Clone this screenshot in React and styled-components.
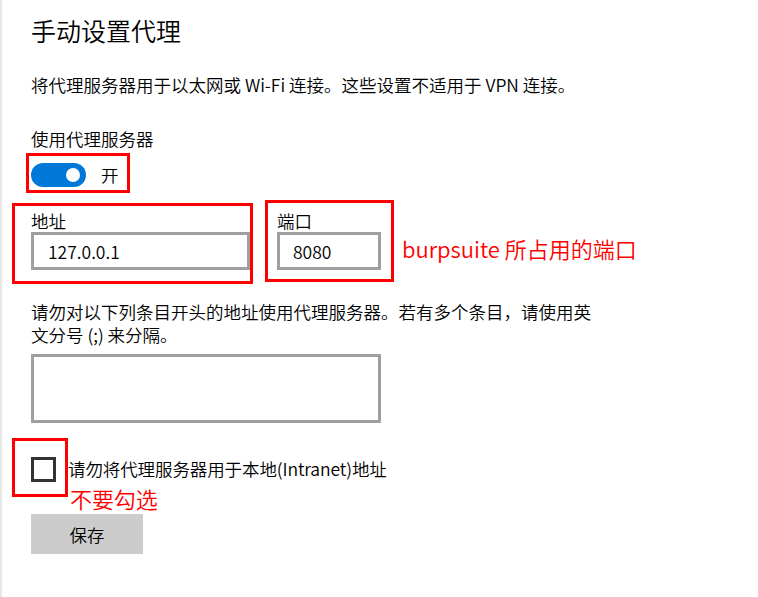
import styled, { createGlobalStyle } from "styled-components";

const GlobalStyle = createGlobalStyle`
  html, body {
    margin: 0;
    padding: 0;
    background: #ffffff;
  }
  body {
    font-family: "Noto Sans CJK SC", "Noto Sans", sans-serif;
    font-weight: 350;
    color: #000000;
  }
`;

const Page = styled.div`
  box-sizing: border-box;
  min-height: 597px;
  border-left: 2px solid #e8e8e8;
  padding: 13px 0 0 29px;
  display: flex;
  flex-direction: column;
  align-items: flex-start;
`;

const Title = styled.h1`
  margin: 0;
  font-size: 25px;
  font-weight: 350;
  line-height: 34px;
`;

const Text = styled.p`
  margin: ${(p) => p.$mt || 0}px 0 0 0;
  font-size: 17.5px;
  line-height: ${(p) => p.$lh || 24}px;
  max-width: ${(p) => p.$maxw || "none"};
`;

const Highlight = styled.div`
  box-sizing: border-box;
  border: 3px solid #ff0000;
  margin: ${(p) => p.$margin || 0};
  padding: ${(p) => p.$pad || 0};
  display: flex;
  flex-direction: ${(p) => (p.$col ? "column" : "row")};
  align-items: ${(p) => (p.$col ? "flex-start" : "center")};
`;

const Toggle = styled.div`
  width: 55px;
  height: 24px;
  border-radius: 12px;
  background: #0078d7;
  position: relative;
  &::after {
    content: "";
    position: absolute;
    right: 6px;
    top: 5px;
    width: 14px;
    height: 14px;
    border-radius: 50%;
    background: #ffffff;
  }
`;

const ToggleLabel = styled.span`
  margin-left: 15px;
  font-size: 17.5px;
  line-height: 24px;
`;

const FieldsRow = styled.div`
  margin: 7px 0 0 -19px;
  display: flex;
  align-items: flex-start;
`;

const FieldLabel = styled.div`
  font-size: 17.5px;
  line-height: 23px;
`;

const Input = styled.div`
  box-sizing: border-box;
  width: ${(p) => p.$w}px;
  height: 38px;
  border: 3px solid #9f9f9f;
  padding-left: ${(p) => p.$pl || 14}px;
  display: flex;
  align-items: center;
  font-size: 17.5px;
`;

const Note = styled.span`
  color: #ff0000;
  font-size: 22px;
  line-height: 30px;
  margin: ${(p) => p.$margin || 0};
`;

const TextArea = styled.div`
  box-sizing: border-box;
  margin-top: 8px;
  width: 350px;
  height: 69px;
  border: 3px solid #9f9f9f;
`;

const CheckRow = styled.div`
  margin: 15px 0 0 -19px;
  display: flex;
  align-items: flex-start;
`;

const CheckBox = styled.div`
  box-sizing: border-box;
  width: 25px;
  height: 25px;
  border: 3px solid #333333;
`;

const CheckText = styled.div`
  display: flex;
  flex-direction: column;
  padding-top: 19px;
  font-size: 17.5px;
  line-height: 23px;
  letter-spacing: -0.1px;
`;

const SaveButton = styled.button`
  margin-top: 1px;
  width: 112px;
  height: 40px;
  border: none;
  background: #cccccc;
  font-family: inherit;
  font-weight: inherit;
  font-size: 17.5px;
  color: #000000;
  padding: 0;
`;

export default function App() {
  return (
    <>
      <GlobalStyle />
      <Page>
        <Title>手动设置代理</Title>
        <Text $mt={26}>将代理服务器用于以太网或 Wi-Fi 连接。这些设置不适用于 VPN 连接。</Text>
        <Text $mt={30}>使用代理服务器</Text>
        <Highlight $margin="2px 0 0 -5px" $pad="7px 8px 3px 2px">
          <Toggle />
          <ToggleLabel>开</ToggleLabel>
        </Highlight>
        <FieldsRow>
          <Highlight $col $margin="3px 0 0 0" $pad="3px 0 11px 16px">
            <FieldLabel>地址</FieldLabel>
            <Input $w={219} $pl={14}>127.0.0.1</Input>
          </Highlight>
          <Highlight $col $margin="0 0 0 12px" $pad="6px 10px 9px 9px">
            <FieldLabel>端口</FieldLabel>
            <Input $w={104} $pl={13}>8080</Input>
          </Highlight>
          <Note $margin="33px 0 0 8px">burpsuite 所占用的端口</Note>
        </FieldsRow>
        <Text $mt={16} $lh={23} $maxw="572px">
          请勿对以下列条目开头的地址使用代理服务器。若有多个条目，请使用英文分号 (;) 来分隔。
        </Text>
        <TextArea />
        <CheckRow>
          <Highlight $margin="0" $pad="16px 9px 12px 16px">
            <CheckBox />
          </Highlight>
          <CheckText>
            <span>请勿将代理服务器用于本地(Intranet)地址</span>
            <Note $margin="3px 0 0 2px">不要勾选</Note>
          </CheckText>
        </CheckRow>
        <SaveButton>保存</SaveButton>
      </Page>
    </>
  );
}
